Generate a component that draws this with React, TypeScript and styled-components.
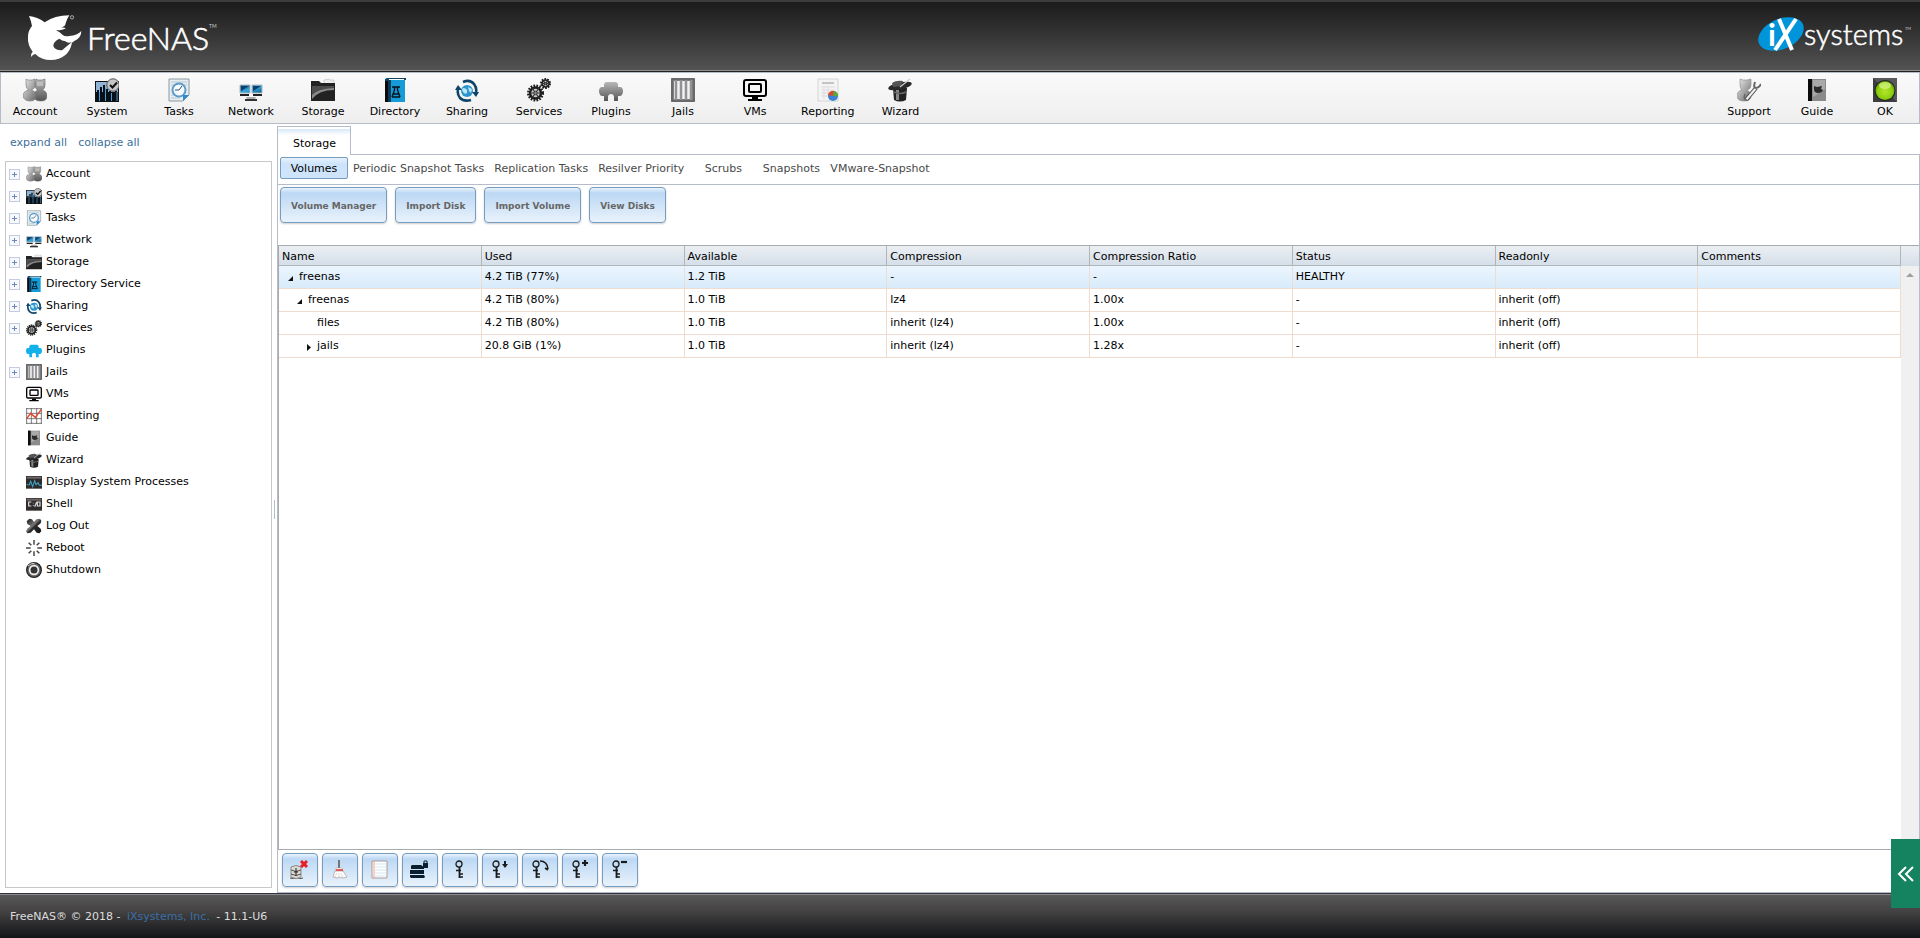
import React from 'react';
import styled, { createGlobalStyle, css } from 'styled-components';

const GlobalStyle = createGlobalStyle`
  * { box-sizing: border-box; }
  body {
    margin: 0;
    background: #fff;
    color: #000;
    font-family: Verdana, "DejaVu Sans", sans-serif;
    font-size: 11px;
    line-height: 14px;
  }
  button { font: inherit; color: inherit; margin: 0; cursor: pointer; }
  a { text-decoration: none; }
`;

/* ---------- icons ---------- */

const HiddenSvg = styled.svg`
  position: absolute;
`;

const Gradients = () => (
  <HiddenSvg width="0" height="0" aria-hidden="true">
    <defs>
      <linearGradient id="silver" x1="0" y1="0" x2="1" y2="1">
        <stop offset="0" stopColor="#eee" />
        <stop offset=".5" stopColor="#aaa" />
        <stop offset="1" stopColor="#666" />
      </linearGradient>
      <linearGradient id="grey" x1="0" y1="0" x2="0" y2="1">
        <stop offset="0" stopColor="#b8b8b8" />
        <stop offset="1" stopColor="#555" />
      </linearGradient>
      <linearGradient id="dark" x1="0" y1="0" x2="1" y2="1">
        <stop offset="0" stopColor="#111" />
        <stop offset=".45" stopColor="#777" />
        <stop offset=".55" stopColor="#2b2b2b" />
        <stop offset="1" stopColor="#111" />
      </linearGradient>
      <linearGradient id="blue" x1="0" y1="0" x2="1" y2="1">
        <stop offset="0" stopColor="#0a4f80" />
        <stop offset=".5" stopColor="#39a9dd" />
        <stop offset="1" stopColor="#0c5c94" />
      </linearGradient>
      <radialGradient id="lamp" cx=".5" cy=".55" r=".55">
        <stop offset="0" stopColor="#b6e52c" />
        <stop offset=".7" stopColor="#8dd00f" />
        <stop offset="1" stopColor="#5a9a00" />
      </radialGradient>
    </defs>
  </HiddenSvg>
);

const gear = (cx: number, cy: number, r: number, w: number) => (
  <g>
    <circle cx={cx} cy={cy} r={r} fill="none" stroke="#1d1d1d" strokeWidth={w} strokeDasharray="1.6 1.2" />
    <circle cx={cx} cy={cy} r={r - w / 2} fill="#c9c9c9" stroke="#1d1d1d" strokeWidth={w * 0.8} />
    <path
      d={`M${cx - r + 1} ${cy}h${2 * r - 2}M${cx - r / 2} ${cy - r + 2}l${r} ${2 * r - 4}M${cx + r / 2} ${cy - r + 2}l${-r} ${2 * r - 4}`}
      stroke="#333"
      strokeWidth="1.200"
    />
    <circle cx={cx} cy={cy} r={r / 4} fill="#888" stroke="#222" strokeWidth=".6" />
  </g>
);

const plugShape =
  'M5 9V7c0-2 1-3 3-3h8c2 0 3 1 3 3v2h2c2 0 3 2 3 4s-1 5-3 5h-2v5h-4v-4c0-4-6-4-6 0v4H5v-5H3c-2 0-3-3-3-5s1-4 3-4z';

const glyphs: Record<string, React.ReactNode> = {
  account: (
    <g>
      <path d="M13 1l2 1h4l3-1v6q0 4-3 5 5 1 5 6 0 5-6 5-7 0-7-5 0-5 4-6-3-1-3-5z" fill="url(#grey)" stroke="#666" strokeWidth=".6" />
      <path d="M14 4h6v4h-6z" fill="#cfcfcf" opacity=".6" />
      <path d="M3 1l2 1h4l3-1v6q0 4-4 5 5 1 5 6 0 5-6 5T0 18q0-5 6-6-3-1-3-5z" fill="url(#silver)" stroke="#777" strokeWidth=".6" />
    </g>
  ),
  system: (
    <g>
      <path d="M0 3h24v21H0z" fill="#111" />
      <path d="M1 4h22v10H1z" fill="#8fb4d4" />
      <path d="M3 12v11M6 9v14M9 7v16M12 11v12M15 13v10M18 15v8M21 13v10" stroke="#061019" strokeWidth="2" />
      <path d="M4.500 14v9M10.500 10v13M16.500 15v8M22 14v9" stroke="#4a9fd8" strokeWidth="1" />
      <circle cx="18" cy="7" r="6.200" fill="#c4c6c8" stroke="#555" />
      <path d="M15 7l2.500 2.500L22 4.500" fill="none" stroke="#111" strokeWidth="2" />
    </g>
  ),
  tasks: (
    <g>
      <path d="M2 1h20v16l-6 6H2z" fill="#e6edf0" stroke="#8a9aa3" />
      <path d="M4 4h16M4 7h16M4 17h10M4 20h9" stroke="#b9c8cf" />
      <circle cx="12" cy="12" r="6.500" fill="#f7fbff" stroke="#5d9acb" strokeWidth="2" />
      <path d="M12 12l3-4M12 12H8" stroke="#31526e" fill="none" />
      <path d="M22 17h-6v6z" fill="#2e8bd0" />
    </g>
  ),
  network: (
    <g>
      <path d="M1 7h10v8H1zM13 7h10v8H13z" fill="url(#blue)" stroke="#a9b9c2" />
      <path d="M2 8h8l-8 5zM14 8h8l-8 5z" fill="#0c3f6b" />
      <path d="M1 17h9M14 17h9" stroke="#222" strokeWidth="2" />
      <path d="M7 19h10l-1 2H8z" fill="#aaa" />
      <path d="M6 21h12v2H6z" fill="#333" />
    </g>
  ),
  storage: (
    <g>
      <path d="M13 2l5-1 1 1h4v4H13z" fill="#eee" stroke="#bbb" strokeWidth=".6" />
      <path d="M0 3h8l2 2h14v18H0z" fill="#222" />
      <path d="M1 8h22v4Q8 12 1 21z" fill="#8a8a8a" />
      <path d="M1 8h22v2Q6 11 1 17z" fill="#4c4c4c" />
    </g>
  ),
  directory: (
    <g>
      <path d="M2 1l2-1h19v2H5v22H2z" fill="#0d4566" />
      <path d="M2 3h4v21H2z" fill="#0a0a0a" />
      <path d="M5 2h17v22H5z" fill="#159bd7" />
      <path d="M5 2h3v22H5z" fill="#083c5a" />
      <path d="M9 9h8M9 19h8M11.500 9v3L9 19M14.500 9v3L17 19M10 16h6" stroke="#06121b" strokeWidth="1.400" fill="none" />
      <path d="M6 1h15v1H6z" fill="#fff" />
    </g>
  ),
  sharing: (
    <g>
      <circle cx="12" cy="13" r="6" fill="#2b95cd" />
      <path d="M8 10q3 0 4 2t-1 4q-3-1-4-4zM13 9l4 2-1 4-2-2z" fill="#bfe6f7" />
      <path d="M8 4q7-3 11 2 3 4 2 8M16 22q-7 2-11-2-3-4-2-8" fill="none" stroke="#0d4468" strokeWidth="2.600" />
      <path d="M17 14h7l-3 5zM0 12h7L3 7z" fill="#0d4468" />
    </g>
  ),
  services: (
    <g>
      {gear(8.5, 15, 7, 3)}
      {gear(18.5, 5.5, 4.5, 2)}
    </g>
  ),
  plugins: <path d={plugShape} fill="url(#grey)" />,
  pluginsBlue: <path d={plugShape} fill="#13b1ea" />,
  jails: (
    <g>
      <path d="M0 0h24v24H0z" fill="#808083" />
      <path d="M3 3h18v18H3z" fill="#f2f2f2" />
      <path d="M5 2v20M10 2v20M15 2v20M20 2v20" stroke="#77777c" strokeWidth="2.400" />
      <path d="M5 2v20M10 2v20M15 2v20M20 2v20" stroke="#c5c5c8" strokeWidth=".7" />
      <path d="M1 1h22v22H1z" fill="none" stroke="#555" />
    </g>
  ),
  vms: (
    <g fill="none" stroke="#000" strokeWidth="2">
      <rect x="1" y="2" width="22" height="16" rx="2" />
      <rect x="6" y="6" width="12" height="8" rx="1" />
      <path d="M9 20h6M5 22h14" />
    </g>
  ),
  reporting: (
    <g>
      <path d="M2 1h20v22H2z" fill="#f4f4f4" stroke="#d4d4d4" />
      <path d="M6 4h12v2H6z" fill="#c4c4c4" />
      <path d="M5 9h14M5 12h14M5 15h9M5 18h7M8 8v13M12 8v9" stroke="#ddd" />
      <circle cx="17" cy="18" r="5" fill="#3b82d2" />
      <path d="M17 18l-5-1a5 5 0 0 1 6-4z" fill="#e2462c" />
      <path d="M17 18l1-5a5 5 0 0 1 4 5z" fill="#58a834" />
    </g>
  ),
  chart: (
    <g>
      <path d="M0 1h24M0 8h24M0 16h24M0 23h24M1 0v24M8 0v24M16 0v24M23 0v24" stroke="#666" strokeWidth="1.300" />
      <path d="M1 16L7 8l7 6 9-12" fill="none" stroke="#e8452f" strokeWidth="2.200" />
    </g>
  ),
  wizard: (
    <g>
      <path d="M5 10h14l-1 12q-6 3-12 0z" fill="#222" />
      <path d="M8 12h3v10H8z" fill="#888" />
      <ellipse cx="12" cy="8" rx="12" ry="3.500" fill="#2a2a2a" transform="rotate(-12 12 8)" />
      <path d="M4 5q4-3 11-2l-2 5-8 1z" fill="#555" />
      <path d="M12 9l10-8" stroke="#ccc" strokeWidth="1.300" />
      <path d="M6 14q6 3 12 0" stroke="#666" fill="none" strokeWidth="1.500" />
    </g>
  ),
  guide: (
    <g>
      <path d="M3 1h18v22H3z" fill="#8b8b8b" />
      <path d="M3 1h4v22H3z" fill="#0c0c0c" />
      <path d="M8 2h12v9L8 19z" fill="#a9a9a9" />
      <path d="M9 8l3 1 5-1-1 3 2 1q-1 3-5 3-4 0-4-4z" fill="#2c2c2c" />
    </g>
  ),
  support: (
    <g>
      <path d="M3 1l3 1h4l4-1v6q0 4-4 5 4 2 4 6 0 5-7 5t-7-5q0-5 5-6-2-1-2-5z" fill="url(#silver)" stroke="#888" strokeWidth=".6" />
      <path d="M9 22L19 10" stroke="#444" strokeWidth="4" />
      <path d="M9 22L19 10" stroke="#eee" strokeWidth="2.200" />
      <path d="M18 4q-2 6 1 6 3 0 5-4" stroke="#666" strokeWidth="2" fill="none" />
      <path d="M8 16q-2 6 2 6" stroke="#666" strokeWidth="1.500" fill="none" />
    </g>
  ),
  ok: (
    <g>
      <path d="M0 0h24v24H0z" fill="#3d3d3f" />
      <path d="M0 0l24 24V0z" fill="#59595b" />
      <circle cx="12" cy="12.500" r="10.500" fill="#222" />
      <circle cx="12" cy="12.500" r="9.500" fill="url(#lamp)" />
      <ellipse cx="12" cy="7.500" rx="6" ry="3.500" fill="#d8f38a" opacity=".7" />
    </g>
  ),
  processes: (
    <g>
      <path d="M0 3h24v19H0z" fill="#2f2b2c" />
      <path d="M1 4h22v3H1z" fill="#6d6767" />
      <path d="M1 16h4l2-5 3 8 3-9 2 6 3-3 2 4h4" fill="none" stroke="#3fa3c4" strokeWidth="1.600" />
    </g>
  ),
  shell: (
    <g>
      <path d="M0 3h24v19H0z" fill="#2f2b2c" />
      <path d="M1 4h22v3H1z" fill="#6d6767" />
      <path d="M8 9H4v6h4M11 10v1M11 14v1M13 16l3-7M17 9v6h4V9z" fill="none" stroke="#ddd" strokeWidth="1.800" />
    </g>
  ),
  logout: (
    <path
      d="M1 5l4-4 4 1 3 4 4-4 5-1 2 3-1 4-5 4 5 4 1 4-3 3-4-1-4-5-5 5-5 1-2-3 2-4 5-4-5-3z"
      fill="url(#dark)"
    />
  ),
  reboot: (
    <path
      d="M12 0v7M12 17v7M0 12h7M17 12h7M4 4l4 4M16 16l4 4M20 4l-4 4M8 16l-4 4"
      stroke="#444"
      strokeWidth="2.200"
    />
  ),
  shutdown: (
    <g>
      <circle cx="12" cy="12" r="11" fill="#666" stroke="#222" strokeWidth="2" />
      <circle cx="12" cy="12" r="6.500" fill="#333" stroke="#eee" strokeWidth="2.500" />
      <path d="M3 6q5-5 10-4" stroke="#ccc" strokeWidth="1.500" fill="none" />
    </g>
  ),
};

const Icon = ({ name, size }: { name: string; size: number }) => (
  <svg width={size} height={size} viewBox="0 0 24 24" aria-hidden="true">
    {glyphs[name]}
  </svg>
);

const keyShape = (
  <g fill="none" stroke="#1b1b1b">
    <circle cx="9" cy="5" r="3" strokeWidth="1.300" />
    <path d="M9.500 8v11" strokeWidth="1.800" />
    <path d="M6 11.500h5M9 15h4M9 18h4" strokeWidth="1.300" />
  </g>
);

const actions: { label: string; art: React.ReactNode }[] = [
  {
    label: 'Detach Volume',
    art: (
      <g>
        <path d="M1 8q5-3 10 0v10q-5 3-10 0z" fill="#dcdad4" stroke="#8d8a85" />
        <path d="M1 11q5 3 10 0M1 15q5 3 10 0M0 19q6 3 13 0" stroke="#55524e" fill="none" />
        <path d="M6 9v8M4 13h4" stroke="#222" />
        <path d="M11 2l6 6M17 2l-6 6" stroke="#ec1c24" strokeWidth="3" />
      </g>
    ),
  },
  {
    label: 'Scrub Volume',
    art: (
      <g>
        <path d="M8 1h2v8H8z" fill="#757575" />
        <path d="M6 9h6l1 3H5z" fill="#fff" stroke="#aaa" strokeWidth=".6" />
        <path d="M5 12h8l4 6-4 1-3-1-3 1-4-1z" fill="#fff" stroke="#b5a5a0" strokeWidth=".8" />
        <path d="M6 11h7" stroke="#e2352d" strokeWidth="1.500" />
        <path d="M7 14l-2 4M11 14l2 4M9 14v4" stroke="#ccc" strokeWidth=".7" />
      </g>
    ),
  },
  {
    label: 'Edit Options',
    art: (
      <g>
        <path d="M2 2h15v17H2z" fill="#fff" stroke="#a99" />
        <path d="M4 2v17" stroke="#eda48c" />
        <path d="M5 5h11M5 8h11M5 11h11M5 14h11M5 17h11" stroke="#cfe7ef" />
      </g>
    ),
  },
  {
    label: 'Create Dataset',
    art: (
      <g fill="#0a1f2e">
        <path d="M2 6h9l3 2v2H1V7zM0 11h14v4H0zM0 16h14l1 2-1 1H1l-1-1z" />
        <path d="M13 4h5v5h-5z" />
        <path d="M14 4V2h3v2" fill="none" stroke="#0a1f2e" />
      </g>
    ),
  },
  { label: 'Create Passphrase', art: keyShape },
  {
    label: 'Download Key',
    art: (
      <g>
        <g transform="translate(-3 0)">{keyShape}</g>
        <path d="M14 2h2v3h2l-3 4-3-4h2z" fill="#1b1b1b" />
      </g>
    ),
  },
  {
    label: 'Encryption Re-Key',
    art: (
      <g>
        <g transform="translate(-3 0)">{keyShape}</g>
        <path d="M10 2q7 0 8 8M18 11l-3-2" stroke="#1b1b1b" strokeWidth="1.600" fill="none" />
      </g>
    ),
  },
  {
    label: 'Add Recovery Key',
    art: (
      <g>
        <g transform="translate(-3 0)">{keyShape}</g>
        <path d="M12 4h6M15 1v6" stroke="#1b1b1b" strokeWidth="2.200" />
      </g>
    ),
  },
  {
    label: 'Remove Recovery Key',
    art: (
      <g>
        <g transform="translate(-3 0)">{keyShape}</g>
        <path d="M11 3h6" stroke="#1b1b1b" strokeWidth="2.200" />
      </g>
    ),
  },
];

/* ---------- page shell ---------- */

const Page = styled.div`
  display: flex;
  flex-direction: column;
  min-height: 100vh;
`;

const Header = styled.header`
  display: flex;
  justify-content: space-between;
  align-items: center;
  height: 72px;
  padding: 0 8px 0 27px;
  border-top: 2px solid #3c3c3c;
  border-bottom: 1px solid #222;
  background: linear-gradient(#1b1b1b, #333 45%, #545454);
  box-shadow: inset 0 -1px 0 #8f8f8f;
`;

const Toolbar = styled.nav`
  display: flex;
  justify-content: space-between;
  height: 52px;
  border: 1px solid #b5bcc7;
  background: linear-gradient(#fafafa, #eee);
`;

const ToolGroup = styled.div<{ $gap: number }>`
  display: flex;
  gap: ${(p) => p.$gap}px;
`;

const ToolButton = styled.button`
  display: flex;
  flex-direction: column;
  align-items: center;
  gap: 3px;
  min-width: 68px;
  padding: 5px 8px 0;
  border: 0;
  background: none;
`;

const Main = styled.main`
  display: flex;
  flex: 1;
`;

const Footer = styled.footer`
  display: flex;
  align-items: center;
  height: 45px;
  padding: 2px 10px 0;
  border-top: 1px solid #33333d;
  background: linear-gradient(#5a5a5a, #434141 40%, #121418);
  box-shadow: inset 0 1px 0 #8a8a8a;
  color: #ddd;
  white-space: pre;

  a {
    margin: 0 3px;
    color: #3a6fa5;
  }
`;

/* ---------- sidebar ---------- */

const Sidebar = styled.aside`
  display: flex;
  flex-direction: column;
  width: 272px;
  padding: 0 0 5px 5px;
`;

const TreeLinks = styled.div`
  display: flex;
  gap: 11px;
  padding: 12px 5px 11px;

  a { color: #40709b; }
`;

const Tree = styled.ul`
  flex: 1;
  margin: 0;
  padding: 0;
  border: 1px solid #c8c8c8;
  list-style: none;
`;

const TreeRow = styled.li`
  display: grid;
  grid-template-columns: 11px 16px 1fr;
  align-items: center;
  height: 22px;
  padding-left: 3px;

  svg { margin: 2px 0 0 6px; }
`;

const TreeLabel = styled.a`
  margin-left: 10px;
  padding-top: 2px;
  color: #000;
`;

const Expander = styled.button`
  width: 11px;
  height: 11px;
  margin-top: 2px;
  padding: 0;
  border: 1px solid #c3cce0;
  background:
    linear-gradient(#6f87b5, #6f87b5) center / 5px 1px no-repeat,
    linear-gradient(#6f87b5, #6f87b5) center / 1px 5px no-repeat,
    #f6f8fc;
`;

const Splitter = styled.div`
  display: flex;
  align-items: center;
  width: 5px;
  padding: 2px 0 0 2px;

  &::after {
    content: '';
    width: 1px;
    height: 19px;
    background: #b5bcc7;
  }
`;

/* ---------- content ---------- */

const Content = styled.section`
  display: flex;
  flex: 1;
  flex-direction: column;
  min-width: 0;
  padding-top: 2px;
`;

const TabStrip = styled.div`
  display: flex;

  &::after {
    content: '';
    flex: 1;
    border-bottom: 1px solid #b5bcc7;
  }
`;

const PageTab = styled.button`
  height: 29px;
  padding: 6px 14px 0 15px;
  border: 1px solid #b5bcc7;
  border-bottom: 0;
  background: linear-gradient(#fff 0 2px, #d7e8f8 2px, #fff 8px);
`;

const Pane = styled.div`
  display: flex;
  flex: 1;
  flex-direction: column;
  border: 1px solid #b5bcc7;
  border-top: 0;
`;

const SubTabs = styled.div`
  display: flex;
  height: 30px;
  padding: 2px 2px 5px;
  border-bottom: 1px solid #b5bcc7;
`;

const SubTab = styled.button<{ $active?: boolean }>`
  min-width: 68px;
  padding: 1px 4px 0;
  border: 1px solid transparent;
  background: none;
  color: #494949;
  white-space: nowrap;
  ${(p) =>
    p.$active &&
    css`
      border-color: #769dc0;
      border-radius: 2px;
      background: linear-gradient(#e6f2fd, #cde4fb 6px);
      color: #000;
    `}
`;

const blueButton = css`
  border: 1px solid #769dc0;
  border-radius: 4px;
  background: linear-gradient(#e9f3fd, #bcd8f4 5px, #e9f2fb);
  box-shadow: 0 1px 2px rgba(0, 0, 0, 0.2);
`;

const ButtonBar = styled.div`
  display: flex;
  gap: 8px;
  height: 60px;
  padding: 2px 2px 22px;
`;

const WideButton = styled.button`
  ${blueButton}
  padding: 2px 10px 0;
  color: #666;
  font-size: 9px;
  font-weight: bold;
  white-space: nowrap;
`;

const GridBox = styled.div`
  display: flex;
  flex: 1;
  border: 1px solid #a9a9b0;
  border-right-width: 0;
`;

const DataTable = styled.table`
  flex: 1;
  align-self: flex-start;
  width: 100%;
  border-collapse: separate;
  border-spacing: 0;
  table-layout: fixed;
`;

const HeadCell = styled.th`
  height: 20px;
  padding: 2px 3px 0;
  border-right: 1px solid #b0b5ba;
  border-bottom: 1px solid #b0b5ba;
  background: linear-gradient(#ebeff3, #d5dfe9);
  font-weight: normal;
  text-align: left;
`;

const Cell = styled.td`
  height: 23px;
  padding: 0 3px;
  border-right: 1px solid #eddccf;
  border-bottom: 1px solid #eddccf;
`;

const Row = styled.tr<{ $selected?: boolean }>`
  background: ${(p) => (p.$selected ? 'linear-gradient(#ebf5fe, #d7eafa)' : '#fff')};
`;

const NameCell = styled.div<{ $level: number }>`
  display: grid;
  grid-template-columns: 7px 1fr;
  align-items: center;
  gap: 5px;
  padding-left: ${(p) => 5 + p.$level * 9}px;

  svg { margin-top: 2px; }
`;

const Scrollbar = styled.div`
  display: flex;
  flex-direction: column;
  justify-content: space-between;
  align-items: center;
  width: 18px;
  padding-bottom: 5px;
  background: linear-gradient(#ebeff3, #d5dfe9 20px, #f0f0f0 20px);
`;

const Arrow = styled.span<{ $up?: boolean }>`
  width: 8px;
  height: 4px;
  margin-top: ${(p) => (p.$up ? 27 : 0)}px;
  background: #a0a0a0;
  clip-path: ${(p) => (p.$up ? 'polygon(50% 0, 100% 100%, 0 100%)' : 'polygon(0 0, 100% 0, 50% 100%)')};
`;

const ActionBar = styled.div`
  display: flex;
  gap: 4px;
  height: 42px;
  padding: 3px 4px 5px;
`;

const ActionButton = styled.button`
  ${blueButton}
  width: 36px;
  padding: 0 0 2px;
  line-height: 0;
`;

const SideHandle = styled.button`
  position: fixed;
  right: 0;
  bottom: 30px;
  display: grid;
  place-items: center;
  width: 29px;
  height: 69px;
  padding: 0;
  border: 0;
  background: #158360;
`;

/* ---------- data ---------- */

const tools = [
  ['Account', 'account'], ['System', 'system'], ['Tasks', 'tasks'], ['Network', 'network'],
  ['Storage', 'storage'], ['Directory', 'directory'], ['Sharing', 'sharing'], ['Services', 'services'],
  ['Plugins', 'plugins'], ['Jails', 'jails'], ['VMs', 'vms'], ['Reporting', 'reporting'], ['Wizard', 'wizard'],
];

const rightTools = [['Support', 'support'], ['Guide', 'guide'], ['OK', 'ok']];

const tree: [string, string, boolean][] = [
  ['Account', 'account', true], ['System', 'system', true], ['Tasks', 'tasks', true],
  ['Network', 'network', true], ['Storage', 'storage', true], ['Directory Service', 'directory', true],
  ['Sharing', 'sharing', true], ['Services', 'services', true], ['Plugins', 'pluginsBlue', false],
  ['Jails', 'jails', true], ['VMs', 'vms', false], ['Reporting', 'chart', false], ['Guide', 'guide', false],
  ['Wizard', 'wizard', false], ['Display System Processes', 'processes', false], ['Shell', 'shell', false],
  ['Log Out', 'logout', false], ['Reboot', 'reboot', false], ['Shutdown', 'shutdown', false],
];

const subTabs = [
  'Volumes', 'Periodic Snapshot Tasks', 'Replication Tasks', 'Resilver Priority', 'Scrubs', 'Snapshots', 'VMware-Snapshot',
];

const columns = ['Name', 'Used', 'Available', 'Compression', 'Compression Ratio', 'Status', 'Readonly', 'Comments'];

const rows: { name: string; level: number; state?: 'open' | 'closed'; cells: string[] }[] = [
  { name: 'freenas', level: 0, state: 'open', cells: ['4.2 TiB (77%)', '1.2 TiB', '-', '-', 'HEALTHY', '', ''] },
  { name: 'freenas', level: 1, state: 'open', cells: ['4.2 TiB (80%)', '1.0 TiB', 'lz4', '1.00x', '-', 'inherit (off)', ''] },
  { name: 'files', level: 2, cells: ['4.2 TiB (80%)', '1.0 TiB', 'inherit (lz4)', '1.00x', '-', 'inherit (off)', ''] },
  { name: 'jails', level: 2, state: 'closed', cells: ['20.8 GiB (1%)', '1.0 TiB', 'inherit (lz4)', '1.28x', '-', 'inherit (off)', ''] },
];

/* ---------- logos ---------- */

const FreeNasLogo = () => (
  <svg width="196" height="56" viewBox="0 0 196 56" role="img" aria-label="FreeNAS">
    <g transform="translate(-27 -9) scale(.33333)">
      <path
        d="M87 48Q112 50 134 67Q164 46 208 46Q200 58 197 70Q196 80 184 82L198 84Q190 91 168 91Q180 96 188 105Q196 111 208 108Q232 106 244 93Q243 110 232 118Q222 124 216 128Q206 178 152 180Q124 180 106 162Q100 162 93 171Q91 162 98 155Q82 134 84 110Q84 92 96 78Q94 64 87 48Z"
        fill="#fff"
      />
      <path d="M178 116Q160 124 160 138Q166 152 186 151Q196 142 216 126Q204 131 196 124Q186 122 178 116Z" fill="#3a3a3a" />
      <circle cx="216" cy="52" r="5" fill="none" stroke="#aaa" strokeWidth="3" />
    </g>
    <text x="60" y="41" fill="#fff" stroke="#fff" strokeWidth=".6" fontFamily="Lato, sans-serif" fontWeight="300" fontSize="32">
      FreeNAS
    </text>
    <text x="182" y="19" fill="#ccc" fontFamily="Lato, sans-serif" fontSize="5">TM</text>
  </svg>
);

const IxLogo = () => (
  <svg width="154" height="56" viewBox="0 0 154 56" role="img" aria-label="iXsystems">
    <ellipse cx="23" cy="25" rx="24" ry="15" fill="#0095da" transform="rotate(-24 23 25)" />
    <text x="10" y="37" fill="#fff" fontFamily="Lato, sans-serif" fontWeight="700" fontSize="31">i</text>
    <path d="M21 10l13 31M38 10L17 41" stroke="#fff" strokeWidth="4" />
    <text x="46" y="36" fill="#fff" stroke="#fff" strokeWidth=".5" fontFamily="Lato, sans-serif" fontWeight="300" fontSize="29">
      systems
    </text>
    <text x="147" y="21" fill="#ccc" fontFamily="Lato, sans-serif" fontSize="4">TM</text>
  </svg>
);

const ToolItem = ({ label, icon }: { label: string; icon: string }) => (
  <ToolButton type="button">
    <Icon name={icon} size={24} />
    {label}
  </ToolButton>
);

const App = () => (
  <Page>
    <GlobalStyle />
    <Gradients />
    <Header>
      <FreeNasLogo />
      <IxLogo />
    </Header>

    <Toolbar aria-label="Main">
      <ToolGroup $gap={4}>
        {tools.map(([label, icon]) => <ToolItem key={label} label={label} icon={icon} />)}
      </ToolGroup>
      <ToolGroup $gap={0}>
        {rightTools.map(([label, icon]) => <ToolItem key={label} label={label} icon={icon} />)}
      </ToolGroup>
    </Toolbar>

    <Main>
      <Sidebar>
        <TreeLinks>
          <a href="#expand">expand all</a>
          <a href="#collapse">collapse all</a>
        </TreeLinks>
        <Tree>
          {tree.map(([label, icon, expandable]) => (
            <TreeRow key={label}>
              {expandable ? <Expander type="button" aria-label={`Expand ${label}`} /> : <span />}
              <Icon name={icon} size={16} />
              <TreeLabel href="#tree">{label}</TreeLabel>
            </TreeRow>
          ))}
        </Tree>
      </Sidebar>
      <Splitter />

      <Content>
        <TabStrip>
          <PageTab type="button">Storage</PageTab>
        </TabStrip>
        <Pane>
          <SubTabs>
            {subTabs.map((t, i) => <SubTab key={t} type="button" $active={i === 0}>{t}</SubTab>)}
          </SubTabs>
          <ButtonBar>
            {['Volume Manager', 'Import Disk', 'Import Volume', 'View Disks'].map((t) => (
              <WideButton key={t} type="button">{t}</WideButton>
            ))}
          </ButtonBar>
          <GridBox>
            <DataTable>
              <thead>
                <tr>{columns.map((c) => <HeadCell key={c} scope="col">{c}</HeadCell>)}</tr>
              </thead>
              <tbody>
                {rows.map((r, i) => (
                  <Row key={i} $selected={i === 0}>
                    <Cell>
                      <NameCell $level={r.level}>
                        <svg width="7" height="7" viewBox="0 0 7 7" aria-hidden="true">
                          {r.state === 'open' && <path d="M6 1v5H1z" fill="#111" />}
                          {r.state === 'closed' && <path d="M2 0l4 3.500L2 7z" fill="#111" />}
                        </svg>
                        {r.name}
                      </NameCell>
                    </Cell>
                    {r.cells.map((c, j) => <Cell key={j}>{c}</Cell>)}
                  </Row>
                ))}
              </tbody>
            </DataTable>
            <Scrollbar>
              <Arrow $up />
              <Arrow />
            </Scrollbar>
          </GridBox>
          <ActionBar>
            {actions.map((a) => (
              <ActionButton key={a.label} type="button" aria-label={a.label}>
                <svg width="20" height="20" viewBox="0 0 20 20" aria-hidden="true">{a.art}</svg>
              </ActionButton>
            ))}
          </ActionBar>
        </Pane>
      </Content>
    </Main>

    <Footer>
      FreeNAS® © 2018 - <a href="#ixsystems">iXsystems, Inc.</a> - 11.1-U6
    </Footer>

    <SideHandle type="button" aria-label="Open side panel">
      <svg width="18" height="18" viewBox="0 0 18 18" fill="none" stroke="#fff" strokeWidth="2" aria-hidden="true">
        <path d="M9 2L2 9l7 7M16 2L9 9l7 7" />
      </svg>
    </SideHandle>
  </Page>
);

export default App;
